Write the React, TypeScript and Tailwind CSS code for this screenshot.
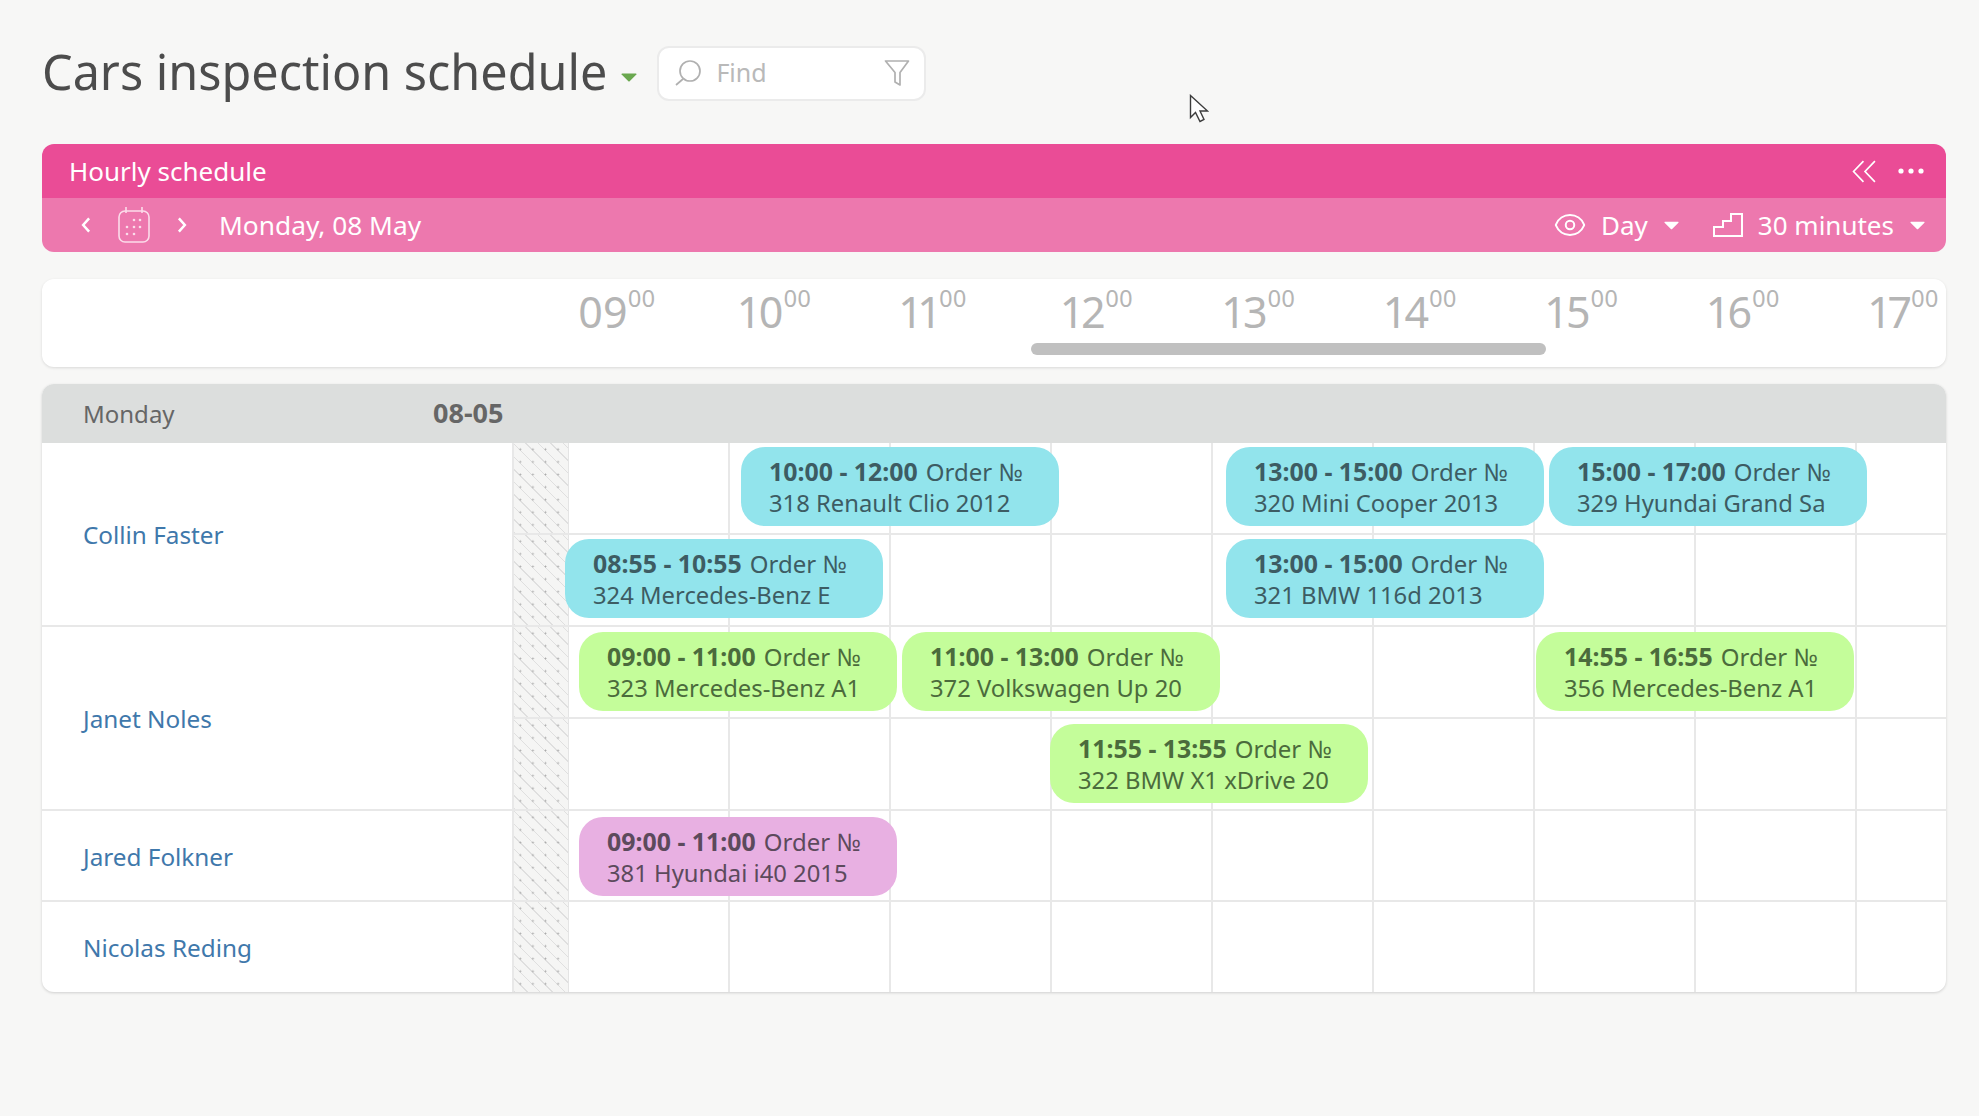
import { Eye } from 'lucide-react';

const hours = ['09', '10', '11', '12', '13', '14', '15', '16', '17'];

const people = [
    { name: 'Collin Faster', height: 'h-[184px]' },
    { name: 'Janet Noles', height: 'h-[184px]' },
    { name: 'Jared Folkner', height: 'h-[91px]' },
    { name: 'Nicolas Reding', height: 'h-[90px]' },
];

const rowHeights = ['h-[92px]', 'h-[92px]', 'h-[92px]', 'h-[92px]', 'h-[91px]', 'h-[90px]'];

const tones = {
    cyan: 'bg-[#92e4ec] text-[#3d5c63]',
    green: 'bg-[#c4fd9a] text-[#4b6b3c]',
    pink: 'bg-[#e8b0e2] text-[#5c4a5c]',
};

type Order = { left: number; top: number; time: string; car: string; tone: keyof typeof tones };

const rows: Order[][] = [
    [
        { left: 227, top: 4, time: '10:00 - 12:00', car: '318 Renault Clio 2012', tone: 'cyan' },
        { left: 712, top: 4, time: '13:00 - 15:00', car: '320 Mini Cooper 2013', tone: 'cyan' },
        { left: 1035, top: 4, time: '15:00 - 17:00', car: '329 Hyundai Grand Sa', tone: 'cyan' },
    ],
    [
        { left: 51, top: 4, time: '08:55 - 10:55', car: '324 Mercedes-Benz E', tone: 'cyan' },
        { left: 712, top: 4, time: '13:00 - 15:00', car: '321 BMW 116d 2013', tone: 'cyan' },
    ],
    [
        { left: 65, top: 5, time: '09:00 - 11:00', car: '323 Mercedes-Benz A1', tone: 'green' },
        { left: 388, top: 5, time: '11:00 - 13:00', car: '372 Volkswagen Up 20', tone: 'green' },
        { left: 1022, top: 5, time: '14:55 - 16:55', car: '356 Mercedes-Benz A1', tone: 'green' },
    ],
    [{ left: 536, top: 5, time: '11:55 - 13:55', car: '322 BMW X1 xDrive 20', tone: 'green' }],
    [{ left: 65, top: 6, time: '09:00 - 11:00', car: '381 Hyundai i40 2015', tone: 'pink' }],
    [],
];

function Caret({ className }: { className: string }) {
    return (
        <svg viewBox="0 0 16 9" className={className} fill="currentColor">
            <path d="M1 .5h14a.6.6 0 0 1 .4 1L8.4 8.4a.6.6 0 0 1-.8 0L.6 1.5A.6.6 0 0 1 1 .5z" />
        </svg>
    );
}

function OrderCard({ order }: { order: Order }) {
    return (
        <div
            className={`absolute z-10 h-[79px] w-[318px] overflow-hidden whitespace-nowrap rounded-[24px] pl-[28px] pt-[9px] text-[23.8px] leading-[31px] ${tones[order.tone]}`}
            style={{ left: order.left, top: order.top }}
        >
            <div>
                <span className="text-[24.9px] font-bold">{order.time}</span>
                <span className="ml-[8px] text-[24px]">Order №</span>
            </div>
            <div>{order.car}</div>
        </div>
    );
}

export default function App() {
    return (
        <div className="relative min-h-screen overflow-hidden bg-[#f7f7f6] pb-[124px] pl-[42px] pr-[33px] pt-[46px] [font-family:'Noto_Sans',sans-serif] font-normal">
            <div className="mb-[44px] flex h-[54px] items-center">
                <h1 className="-mt-[3px] text-[48.5px] font-normal leading-none text-[#4c4c4c]">Cars inspection schedule</h1>
                <Caret className="ml-[14px] mt-[8px] h-[9px] w-[16px] text-[#6aa84f]" />
                <div className="ml-[20px] flex h-[55px] w-[269px] items-center rounded-[12px] border-2 border-[#ebebeb] bg-white pl-[15px] pr-[14px]">
                    <svg viewBox="0 0 28 28" className="h-[28px] w-[28px] text-[#b0b0b0]" fill="none" stroke="currentColor" strokeWidth="1.7">
                        <circle cx="16" cy="12" r="10" />
                        <path d="M9 20l-7 6" />
                    </svg>
                    <span className="ml-[14px] flex-1 text-[25px] text-[#b9b9b9]">Find</span>
                    <svg viewBox="0 0 26 28" className="h-[28px] w-[26px] text-[#b0b0b0]" fill="none" stroke="currentColor" strokeWidth="1.7" strokeLinejoin="round">
                        <path d="M1.5 2h23L16 13.5V26l-5-3v-9.5z" />
                    </svg>
                </div>
            </div>

            <div className="overflow-hidden rounded-[12px] text-white">
                <div className="flex h-[54px] items-center bg-[#ea4c96] pl-[27px] pr-[22px]">
                    <span className="flex-1 text-[26px] leading-none">Hourly schedule</span>
                    <svg viewBox="0 0 24 22" className="mr-[21px] h-[23px] w-[25px]" fill="none" stroke="currentColor" strokeWidth="1.6">
                        <path d="M11 1L1.5 11 11 21M22 1l-9.5 10L22 21" />
                    </svg>
                    <svg viewBox="0 0 26 6" className="h-[6px] w-[26px]" fill="currentColor">
                        <circle cx="3" cy="3" r="2.6" />
                        <circle cx="13" cy="3" r="2.6" />
                        <circle cx="23" cy="3" r="2.6" />
                    </svg>
                </div>
                <div className="flex h-[54px] items-center bg-[#ed78ae] pl-[39px] pr-[21px]">
                    <svg viewBox="0 0 10 18" className="h-[16px] w-[10px]" fill="none" stroke="currentColor" strokeWidth="2.8">
                        <path d="M8.5 1.5L1.8 9l6.7 7.5" />
                    </svg>
                    <svg viewBox="0 0 32 38" className="ml-[27px] h-[38px] w-[32px] text-[#fbdcea]" fill="none" stroke="currentColor" strokeWidth="1.6">
                        <rect x="1" y="5" width="30" height="31" rx="6" />
                        <path d="M8 1v6M24 1v6" />
                        <g fill="currentColor" stroke="none">
                            <circle cx="16" cy="14" r="1.3" />
                            <circle cx="22" cy="14" r="1.3" />
                            <circle cx="9" cy="21" r="1.3" />
                            <circle cx="16" cy="21" r="1.3" />
                            <circle cx="22" cy="21" r="1.3" />
                            <circle cx="9" cy="28" r="1.3" />
                            <circle cx="16" cy="28" r="1.3" />
                        </g>
                    </svg>
                    <svg viewBox="0 0 10 18" className="ml-[27px] h-[16px] w-[10px]" fill="none" stroke="currentColor" strokeWidth="2.8">
                        <path d="M1.5 1.5L8.2 9l-6.7 7.5" />
                    </svg>
                    <span className="ml-[32px] flex-1 text-[26.3px] leading-none">Monday, 08 May</span>
                    <Eye className="h-[34px] w-[34px]" strokeWidth={1.4} />
                    <span className="ml-[14px] text-[26px] leading-none">Day</span>
                    <Caret className="ml-[16px] h-[9px] w-[15px]" />
                    <svg viewBox="0 0 30 24" className="ml-[34px] h-[24px] w-[30px]" fill="none" stroke="currentColor" strokeWidth="2">
                        <path d="M1 23V14h9V8h8V1h11v22z" />
                    </svg>
                    <span className="ml-[15px] text-[26px] leading-none">30 minutes</span>
                    <Caret className="ml-[16px] h-[9px] w-[15px]" />
                </div>
            </div>

            <div className="relative mt-[27px] flex h-[88px] rounded-[12px] bg-white pl-[536px] shadow-[0_1px_3px_rgba(0,0,0,0.12)]">
                {hours.map((hour) => (
                    <div key={hour} className="flex w-[161.5px] shrink-0 items-start pt-[3px] text-[#b5b5b5] proportional-nums">
                        <span className="text-[43px] leading-[60px]">{hour}</span>
                        <span className="text-[23.5px] leading-[32px]">00</span>
                    </div>
                ))}
                <div className="absolute bottom-[12px] left-[989px] h-[12px] w-[515px] rounded-full bg-[#c0c0c0]" />
            </div>

            <div className="mt-[17px] overflow-hidden rounded-[12px] bg-white shadow-[0_1px_3px_rgba(0,0,0,0.16)]">
                <div className="flex h-[59px] items-center bg-[#dcdedd] text-[24px] text-[#666]">
                    <span className="w-[391px] pl-[41px]">Monday</span>
                    <span className="text-[27px] font-bold">08-05</span>
                </div>
                <div className="flex">
                    <div className="w-[470px] shrink-0">
                        {people.map((person, i) => (
                            <div
                                key={person.name}
                                className={`flex items-center pl-[41px] pt-[3px] text-[24.3px] text-[#3f78ab] ${person.height} ${i < people.length - 1 ? 'border-b-2 border-[#e8e8e8]' : ''}`}
                            >
                                {person.name}
                            </div>
                        ))}
                    </div>
                    <div className="flex-1 border-l-2 border-[#e8e8e8]">
                        {rows.map((orders, i) => (
                            <div key={i} className={`relative flex ${rowHeights[i]} ${i < rows.length - 1 ? 'border-b-2 border-[#e8e8e8]' : ''}`}>
                                <div className="w-[55px] shrink-0 border-r border-[#e4e4e4] [background:radial-gradient(circle,#a9a9a9_0.7px,transparent_1.2px)_0_0/12.6px_12.6px,repeating-linear-gradient(45deg,#dfdfdf_0,#dfdfdf_1px,#f5f5f4_1px,#f5f5f4_8.9px)]" />
                                {hours.map((hour) => (
                                    <div key={hour} className="w-[161px] shrink-0 border-r-2 border-[#e8e8e8] last:w-[90px] last:border-r-0" />
                                ))}
                                {orders.map((order) => (
                                    <OrderCard key={order.time + order.car} order={order} />
                                ))}
                            </div>
                        ))}
                    </div>
                </div>
            </div>

            <svg viewBox="0 0 20 29" className="absolute left-[1189px] top-[94px] h-[29px] w-[20px]" fill="#fff" stroke="#3c3c3c" strokeWidth="1.4">
                <path d="M1.5 1.5v22l5-5 4.5 9 4-2-4-8.5h7.5z" />
            </svg>
        </div>
    );
}
